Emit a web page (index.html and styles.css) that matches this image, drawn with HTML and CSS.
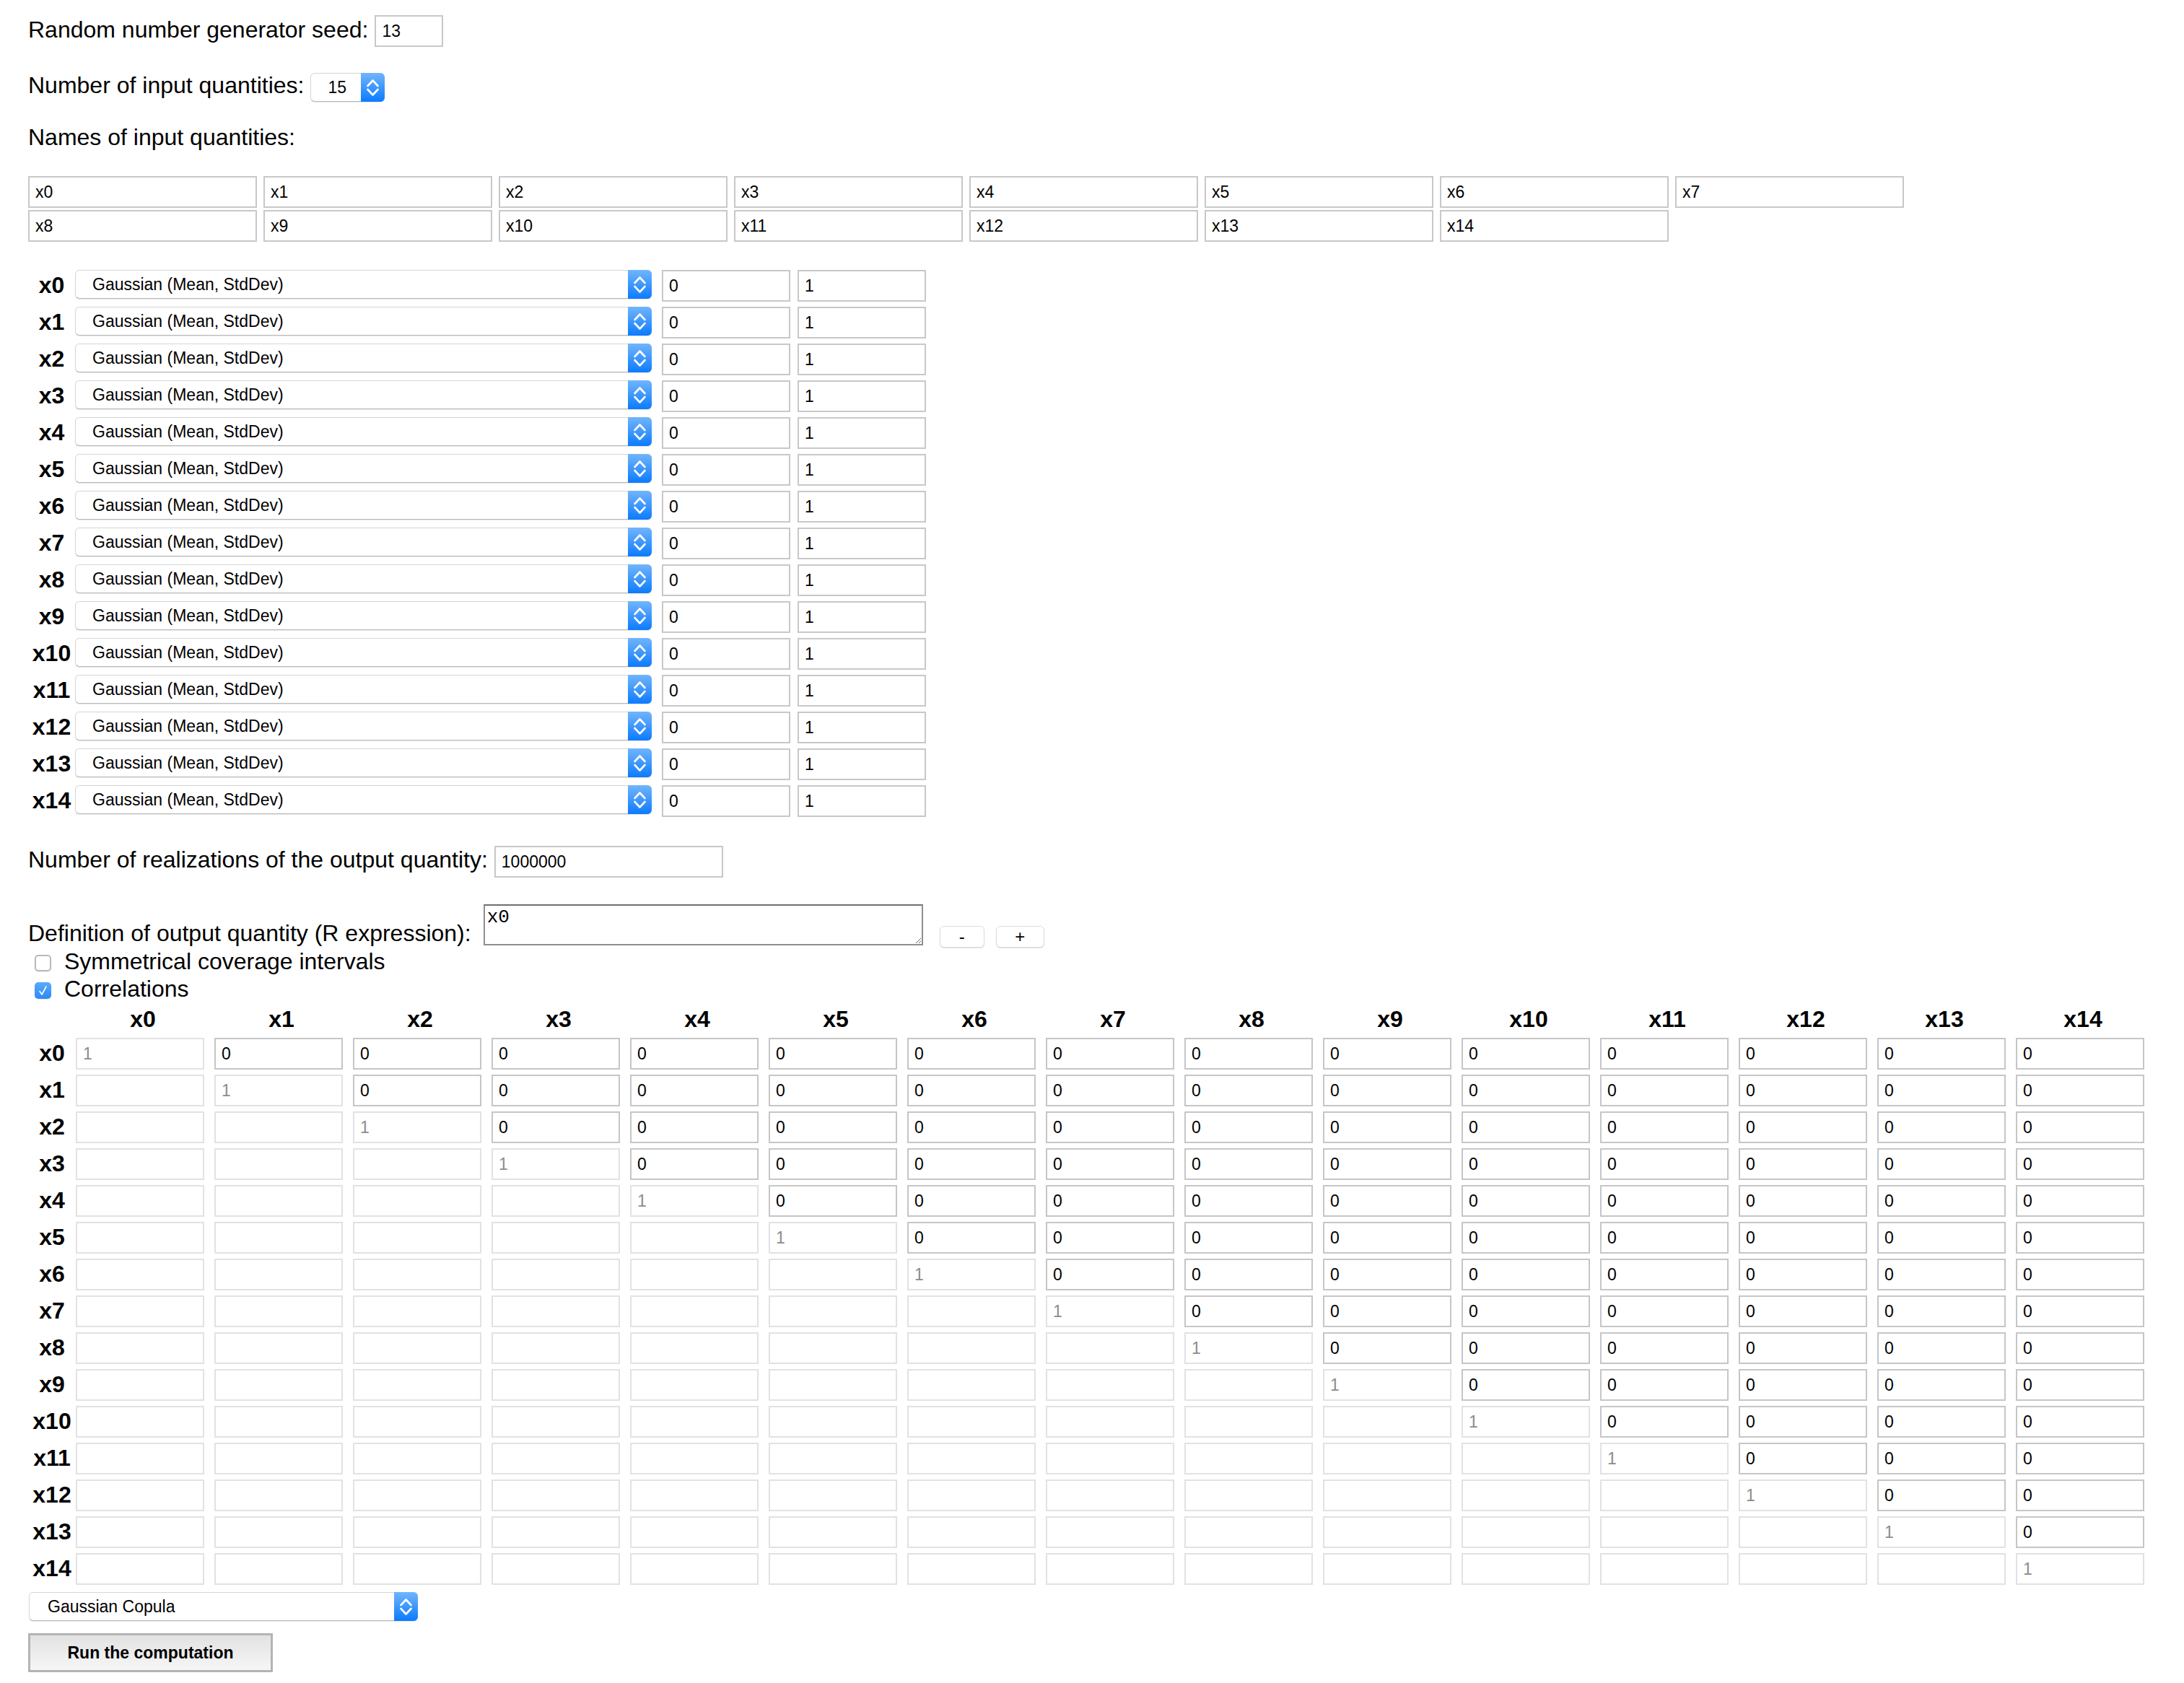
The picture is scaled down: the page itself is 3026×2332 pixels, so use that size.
FILE: index.html
```html
<!DOCTYPE html>
<html lang="en">
<head>
<meta charset="utf-8">
<title>Monte Carlo uncertainty</title>
<link rel="stylesheet" href="styles.css">
</head>
<body>
<svg class="defs" width="0" height="0" aria-hidden="true"><defs><symbol id="chev" viewBox="0 0 33 40"><path d="M9.5 18 16.5 10.5 23.5 18M9.5 23 16.5 30.5 23.5 23" fill="none" stroke="#fff" stroke-width="2.6" stroke-linecap="round" stroke-linejoin="round"/></symbol></defs></svg>
<form class="page">
  <div class="row seed-row"><span class="row-label">Random number generator seed:</span><input class="txt seed" value="13"></div>

  <div class="row num-row"><span class="row-label">Number of input quantities:</span><span class="sel sel-num"><select><option>15</option></select><span class="arr"><svg><use href="#chev"/></svg></span></span></div>

  <div class="names-title">Names of input quantities:</div>
  <div class="names">
    <input class="txt" value="x0"><input class="txt" value="x1"><input class="txt" value="x2"><input class="txt" value="x3"><input class="txt" value="x4"><input class="txt" value="x5"><input class="txt" value="x6"><input class="txt" value="x7">
    <input class="txt" value="x8"><input class="txt" value="x9"><input class="txt" value="x10"><input class="txt" value="x11"><input class="txt" value="x12"><input class="txt" value="x13"><input class="txt" value="x14">
  </div>

  <div class="dists">
    <span class="vl">x0</span><span class="sel sel-dist"><select><option>Gaussian (Mean, StdDev)</option></select><span class="arr"><svg><use href="#chev"/></svg></span></span><input class="txt par" value="0"><input class="txt par" value="1">
    <span class="vl">x1</span><span class="sel sel-dist"><select><option>Gaussian (Mean, StdDev)</option></select><span class="arr"><svg><use href="#chev"/></svg></span></span><input class="txt par" value="0"><input class="txt par" value="1">
    <span class="vl">x2</span><span class="sel sel-dist"><select><option>Gaussian (Mean, StdDev)</option></select><span class="arr"><svg><use href="#chev"/></svg></span></span><input class="txt par" value="0"><input class="txt par" value="1">
    <span class="vl">x3</span><span class="sel sel-dist"><select><option>Gaussian (Mean, StdDev)</option></select><span class="arr"><svg><use href="#chev"/></svg></span></span><input class="txt par" value="0"><input class="txt par" value="1">
    <span class="vl">x4</span><span class="sel sel-dist"><select><option>Gaussian (Mean, StdDev)</option></select><span class="arr"><svg><use href="#chev"/></svg></span></span><input class="txt par" value="0"><input class="txt par" value="1">
    <span class="vl">x5</span><span class="sel sel-dist"><select><option>Gaussian (Mean, StdDev)</option></select><span class="arr"><svg><use href="#chev"/></svg></span></span><input class="txt par" value="0"><input class="txt par" value="1">
    <span class="vl">x6</span><span class="sel sel-dist"><select><option>Gaussian (Mean, StdDev)</option></select><span class="arr"><svg><use href="#chev"/></svg></span></span><input class="txt par" value="0"><input class="txt par" value="1">
    <span class="vl">x7</span><span class="sel sel-dist"><select><option>Gaussian (Mean, StdDev)</option></select><span class="arr"><svg><use href="#chev"/></svg></span></span><input class="txt par" value="0"><input class="txt par" value="1">
    <span class="vl">x8</span><span class="sel sel-dist"><select><option>Gaussian (Mean, StdDev)</option></select><span class="arr"><svg><use href="#chev"/></svg></span></span><input class="txt par" value="0"><input class="txt par" value="1">
    <span class="vl">x9</span><span class="sel sel-dist"><select><option>Gaussian (Mean, StdDev)</option></select><span class="arr"><svg><use href="#chev"/></svg></span></span><input class="txt par" value="0"><input class="txt par" value="1">
    <span class="vl">x10</span><span class="sel sel-dist"><select><option>Gaussian (Mean, StdDev)</option></select><span class="arr"><svg><use href="#chev"/></svg></span></span><input class="txt par" value="0"><input class="txt par" value="1">
    <span class="vl">x11</span><span class="sel sel-dist"><select><option>Gaussian (Mean, StdDev)</option></select><span class="arr"><svg><use href="#chev"/></svg></span></span><input class="txt par" value="0"><input class="txt par" value="1">
    <span class="vl">x12</span><span class="sel sel-dist"><select><option>Gaussian (Mean, StdDev)</option></select><span class="arr"><svg><use href="#chev"/></svg></span></span><input class="txt par" value="0"><input class="txt par" value="1">
    <span class="vl">x13</span><span class="sel sel-dist"><select><option>Gaussian (Mean, StdDev)</option></select><span class="arr"><svg><use href="#chev"/></svg></span></span><input class="txt par" value="0"><input class="txt par" value="1">
    <span class="vl">x14</span><span class="sel sel-dist"><select><option>Gaussian (Mean, StdDev)</option></select><span class="arr"><svg><use href="#chev"/></svg></span></span><input class="txt par" value="0"><input class="txt par" value="1">
  </div>

  <div class="row real-row"><span class="row-label">Number of realizations of the output quantity:</span><input class="txt real" value="1000000"></div>

  <div class="row def-row"><span class="row-label">Definition of output quantity (R expression):</span><textarea>x0</textarea><button type="button" class="pm minus">-</button><button type="button" class="pm plus">+</button></div>

  <label class="check-row first"><span class="cb"></span>Symmetrical coverage intervals</label>
  <label class="check-row"><span class="cb on"><svg viewBox="0 0 23 23"><path d="M7 12.5 10 17 16 6" fill="none" stroke="#fff" stroke-width="1.6" stroke-linecap="round" stroke-linejoin="round"/></svg></span>Correlations</label>

  <div class="corr">
    <span></span><span class="ch">x0</span><span class="ch">x1</span><span class="ch">x2</span><span class="ch">x3</span><span class="ch">x4</span><span class="ch">x5</span><span class="ch">x6</span><span class="ch">x7</span><span class="ch">x8</span><span class="ch">x9</span><span class="ch">x10</span><span class="ch">x11</span><span class="ch">x12</span><span class="ch">x13</span><span class="ch">x14</span>
    <span class="rl">x0</span><input class="c dg" value="1" disabled><input class="c" value="0"><input class="c" value="0"><input class="c" value="0"><input class="c" value="0"><input class="c" value="0"><input class="c" value="0"><input class="c" value="0"><input class="c" value="0"><input class="c" value="0"><input class="c" value="0"><input class="c" value="0"><input class="c" value="0"><input class="c" value="0"><input class="c" value="0">
    <span class="rl">x1</span><input class="c lo" disabled><input class="c dg" value="1" disabled><input class="c" value="0"><input class="c" value="0"><input class="c" value="0"><input class="c" value="0"><input class="c" value="0"><input class="c" value="0"><input class="c" value="0"><input class="c" value="0"><input class="c" value="0"><input class="c" value="0"><input class="c" value="0"><input class="c" value="0"><input class="c" value="0">
    <span class="rl">x2</span><input class="c lo" disabled><input class="c lo" disabled><input class="c dg" value="1" disabled><input class="c" value="0"><input class="c" value="0"><input class="c" value="0"><input class="c" value="0"><input class="c" value="0"><input class="c" value="0"><input class="c" value="0"><input class="c" value="0"><input class="c" value="0"><input class="c" value="0"><input class="c" value="0"><input class="c" value="0">
    <span class="rl">x3</span><input class="c lo" disabled><input class="c lo" disabled><input class="c lo" disabled><input class="c dg" value="1" disabled><input class="c" value="0"><input class="c" value="0"><input class="c" value="0"><input class="c" value="0"><input class="c" value="0"><input class="c" value="0"><input class="c" value="0"><input class="c" value="0"><input class="c" value="0"><input class="c" value="0"><input class="c" value="0">
    <span class="rl">x4</span><input class="c lo" disabled><input class="c lo" disabled><input class="c lo" disabled><input class="c lo" disabled><input class="c dg" value="1" disabled><input class="c" value="0"><input class="c" value="0"><input class="c" value="0"><input class="c" value="0"><input class="c" value="0"><input class="c" value="0"><input class="c" value="0"><input class="c" value="0"><input class="c" value="0"><input class="c" value="0">
    <span class="rl">x5</span><input class="c lo" disabled><input class="c lo" disabled><input class="c lo" disabled><input class="c lo" disabled><input class="c lo" disabled><input class="c dg" value="1" disabled><input class="c" value="0"><input class="c" value="0"><input class="c" value="0"><input class="c" value="0"><input class="c" value="0"><input class="c" value="0"><input class="c" value="0"><input class="c" value="0"><input class="c" value="0">
    <span class="rl">x6</span><input class="c lo" disabled><input class="c lo" disabled><input class="c lo" disabled><input class="c lo" disabled><input class="c lo" disabled><input class="c lo" disabled><input class="c dg" value="1" disabled><input class="c" value="0"><input class="c" value="0"><input class="c" value="0"><input class="c" value="0"><input class="c" value="0"><input class="c" value="0"><input class="c" value="0"><input class="c" value="0">
    <span class="rl">x7</span><input class="c lo" disabled><input class="c lo" disabled><input class="c lo" disabled><input class="c lo" disabled><input class="c lo" disabled><input class="c lo" disabled><input class="c lo" disabled><input class="c dg" value="1" disabled><input class="c" value="0"><input class="c" value="0"><input class="c" value="0"><input class="c" value="0"><input class="c" value="0"><input class="c" value="0"><input class="c" value="0">
    <span class="rl">x8</span><input class="c lo" disabled><input class="c lo" disabled><input class="c lo" disabled><input class="c lo" disabled><input class="c lo" disabled><input class="c lo" disabled><input class="c lo" disabled><input class="c lo" disabled><input class="c dg" value="1" disabled><input class="c" value="0"><input class="c" value="0"><input class="c" value="0"><input class="c" value="0"><input class="c" value="0"><input class="c" value="0">
    <span class="rl">x9</span><input class="c lo" disabled><input class="c lo" disabled><input class="c lo" disabled><input class="c lo" disabled><input class="c lo" disabled><input class="c lo" disabled><input class="c lo" disabled><input class="c lo" disabled><input class="c lo" disabled><input class="c dg" value="1" disabled><input class="c" value="0"><input class="c" value="0"><input class="c" value="0"><input class="c" value="0"><input class="c" value="0">
    <span class="rl">x10</span><input class="c lo" disabled><input class="c lo" disabled><input class="c lo" disabled><input class="c lo" disabled><input class="c lo" disabled><input class="c lo" disabled><input class="c lo" disabled><input class="c lo" disabled><input class="c lo" disabled><input class="c lo" disabled><input class="c dg" value="1" disabled><input class="c" value="0"><input class="c" value="0"><input class="c" value="0"><input class="c" value="0">
    <span class="rl">x11</span><input class="c lo" disabled><input class="c lo" disabled><input class="c lo" disabled><input class="c lo" disabled><input class="c lo" disabled><input class="c lo" disabled><input class="c lo" disabled><input class="c lo" disabled><input class="c lo" disabled><input class="c lo" disabled><input class="c lo" disabled><input class="c dg" value="1" disabled><input class="c" value="0"><input class="c" value="0"><input class="c" value="0">
    <span class="rl">x12</span><input class="c lo" disabled><input class="c lo" disabled><input class="c lo" disabled><input class="c lo" disabled><input class="c lo" disabled><input class="c lo" disabled><input class="c lo" disabled><input class="c lo" disabled><input class="c lo" disabled><input class="c lo" disabled><input class="c lo" disabled><input class="c lo" disabled><input class="c dg" value="1" disabled><input class="c" value="0"><input class="c" value="0">
    <span class="rl">x13</span><input class="c lo" disabled><input class="c lo" disabled><input class="c lo" disabled><input class="c lo" disabled><input class="c lo" disabled><input class="c lo" disabled><input class="c lo" disabled><input class="c lo" disabled><input class="c lo" disabled><input class="c lo" disabled><input class="c lo" disabled><input class="c lo" disabled><input class="c lo" disabled><input class="c dg" value="1" disabled><input class="c" value="0">
    <span class="rl">x14</span><input class="c lo" disabled><input class="c lo" disabled><input class="c lo" disabled><input class="c lo" disabled><input class="c lo" disabled><input class="c lo" disabled><input class="c lo" disabled><input class="c lo" disabled><input class="c lo" disabled><input class="c lo" disabled><input class="c lo" disabled><input class="c lo" disabled><input class="c lo" disabled><input class="c lo" disabled><input class="c dg" value="1" disabled>
  </div>

  <span class="sel sel-cop"><select><option>Gaussian Copula</option></select><span class="arr"><svg><use href="#chev"/></svg></span></span>

  <button type="button" class="run">Run the computation</button>
</form>
</body>
</html>
```

FILE: styles.css
```css
* { box-sizing: border-box; }

html, body {
  margin: 0;
  background: #fff;
}

body {
  font-family: "Liberation Sans", Arial, Helvetica, sans-serif;
  font-size: 32px;
  color: #000;
}

.defs {
  position: absolute;
  width: 0;
  height: 0;
  overflow: hidden;
}

.page {
  padding: 21px 0 40px 39px;
}

.row {
  display: flex;
  align-items: center;
  gap: 9px;
}

.row-label {
  line-height: 37px;
  white-space: nowrap;
}

.txt {
  display: block;
  height: 44px;
  margin: 0;
  padding: 0 8px;
  border: 2px solid #c8c8c8;
  border-radius: 0;
  background: #fff;
  color: #000;
  font: 23px "Liberation Sans", Arial, sans-serif;
  outline: none;
}

.seed { width: 95px; }
.seed-row .row-label { margin-bottom: 3px; }

.num-row { margin-top: 35px; }
.num-row .row-label { margin-bottom: 4px; }

.names-title {
  margin-top: 31px;
  line-height: 37px;
}

.names {
  display: grid;
  grid-template-columns: repeat(8, 317px);
  column-gap: 9px;
  row-gap: 3px;
  margin-top: 35px;
}

.names .txt { width: 317px; }

/* distribution rows */
.dists {
  display: grid;
  grid-template-columns: 65px 813px 188px 178px;
  grid-auto-rows: 44px;
  row-gap: 7px;
  align-items: start;
  margin-top: 39px;
}

.vl {
  font-weight: bold;
  line-height: 42px;
  text-align: center;
}

.par { width: 178px; }

/* select boxes */
.sel {
  position: relative;
  display: block;
  height: 40px;
}

.sel select {
  -webkit-appearance: none;
  appearance: none;
  display: block;
  width: 100%;
  height: 40px;
  margin: 0;
  padding: 0 40px 0 23px;
  border: 1px solid #d6d6d6;
  border-bottom-color: #b8b8b8;
  border-radius: 6px;
  background: #fff;
  color: #000;
  font: 23px "Liberation Sans", Arial, sans-serif;
  box-shadow: 0 1px 1px rgba(0, 0, 0, 0.10);
  outline: none;
}

.arr {
  position: absolute;
  top: 0;
  right: 0;
  width: 33px;
  height: 40px;
  border-radius: 0 6px 6px 0;
  background: linear-gradient(#72b5fb, #0b7bff);
  pointer-events: none;
}

.arr svg {
  display: block;
  width: 33px;
  height: 40px;
}

.sel-dist { width: 799px; }
.sel-num { width: 103px; }
.sel-cop {
  width: 539px;
  margin: 10px 0 0 1px;
}
.sel-cop select { padding-left: 25px; }

/* realizations & definition */
.real-row { margin-top: 40px; }
.real-row .row-label { margin-bottom: 5px; }
.real { width: 317px; }

.def-row {
  margin-top: 37px;
  align-items: flex-end;
  gap: 0;
}

.def-row .row-label { margin-right: 17px; }

textarea {
  display: block;
  width: 609px;
  height: 57px;
  margin: 0 0 2px 0;
  padding: 1px 3px;
  border: 2px solid #8e8e8e;
  border-top-color: #6f6f6f;
  border-radius: 0;
  background: #fff;
  color: #000;
  font: 26px "Liberation Mono", "Courier New", monospace;
  outline: none;
}

.pm {
  height: 30px;
  margin: 0 0 -1px 0;
  padding: 0;
  border: 1px solid #dcdcdc;
  border-radius: 6px;
  background: #fff;
  box-shadow: 0 1px 1px rgba(0, 0, 0, 0.12);
  color: #000;
  font: 24px/28px "Liberation Sans", Arial, sans-serif;
}

.minus { width: 62px; margin-left: 23px; }
.plus { width: 67px; margin-left: 16px; }

/* checkboxes */
.check-row {
  display: flex;
  align-items: center;
  line-height: 38px;
}

.check-row.first { margin-top: 1px; }

.cb {
  display: block;
  width: 23px;
  height: 23px;
  margin: 5px 18px 0 9px;
  border: 2px solid #b9b9b9;
  border-radius: 5px;
  background: #fff;
  box-shadow: 0 1px 1px rgba(0, 0, 0, 0.08);
}

.cb.on {
  border: none;
  background: linear-gradient(#5aabfa, #2b8af6);
}

.cb svg {
  display: block;
  width: 23px;
  height: 23px;
}

/* correlation matrix */
.corr {
  display: grid;
  grid-template-columns: 66px repeat(15, 192px);
  grid-template-rows: 37px;
  grid-auto-rows: 44px;
  row-gap: 7px;
  margin-top: 5px;
}

.ch {
  width: 186px;
  font-weight: bold;
  line-height: 37px;
  text-align: center;
}

.rl {
  font-weight: bold;
  line-height: 42px;
  text-align: center;
}

.c {
  display: block;
  width: 178px;
  height: 44px;
  margin: 0;
  padding: 0 8px;
  border: 2px solid #c6c6c6;
  border-radius: 0;
  background: #fff;
  color: #000;
  font: 23px "Liberation Sans", Arial, sans-serif;
  outline: none;
}

.c.lo,
.c.dg {
  border-color: #e2e2e2;
  background: #fff;
}

.c.dg {
  color: #8c8c8c;
  -webkit-text-fill-color: #8c8c8c;
}

/* run button */
.run {
  display: block;
  width: 339px;
  height: 54px;
  margin: 17px 0 0 0;
  padding: 0;
  border: 3px solid #b4b4b4;
  border-radius: 0;
  background: linear-gradient(#e2e2e2, #f6f6f6);
  color: #000;
  font: bold 23px "Liberation Sans", Arial, sans-serif;
}
```
